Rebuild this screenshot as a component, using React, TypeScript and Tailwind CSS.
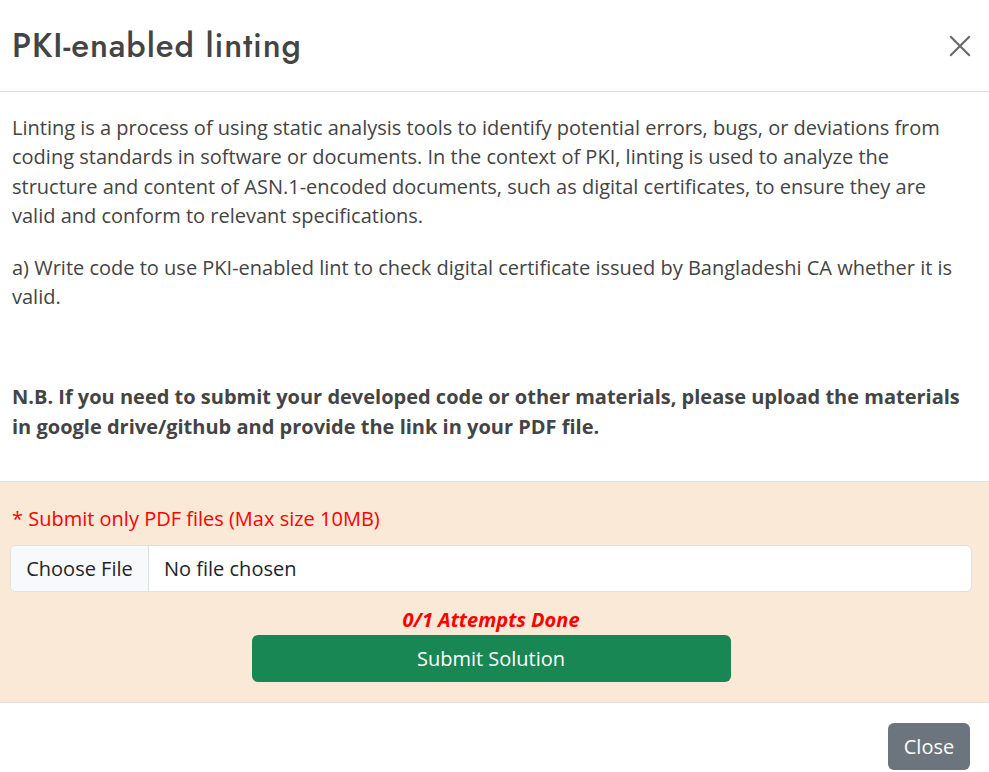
import React from 'react';

export default function App() {
  return (
    <div className="w-[989px] h-[772px] bg-white overflow-hidden font-['Open_Sans',sans-serif] text-[#444]">
      {/* Header */}
      <div className="h-[92px] flex items-center justify-between pl-[12px] pr-[16px] border-b border-[#dee2e6]">
        <h1 className="text-[33px] font-['Jost','Lato',sans-serif] font-medium text-[#444] tracking-[0.9px]">
          PKI-enabled linting
        </h1>
        <button type="button" className="w-[26px] h-[26px] flex items-center justify-center">
          <svg width="22" height="22" viewBox="0 0 22 22" fill="none">
            <path d="M2 2 L20 20 M20 2 L2 20" stroke="#6b6b6b" strokeWidth="2.2" strokeLinecap="square" />
          </svg>
        </button>
      </div>

      {/* Body */}
      <div className="h-[389px] pl-[12px] pr-[20px] pt-[21px] text-[20px] leading-[29.4px]">
        <p className="mb-[22px]">
          Linting is a process of using static analysis tools to identify potential errors, bugs, or deviations from
          coding standards in software or documents. In the context of PKI, linting is used to analyze the structure
          and content of ASN.1-encoded documents, such as digital certificates, to ensure they are valid and conform
          to relevant specifications.
        </p>
        <p>
          a) Write code to use PKI-enabled lint to check digital certificate issued by Bangladeshi CA whether it is
          valid.
        </p>
        <p className="mt-[71px] font-bold">
          N.B. If you need to submit your developed code or other materials, please upload the materials in google
          drive/github and provide the link in your PDF file.
        </p>
      </div>

      {/* Submission area */}
      <div className="h-[221px] bg-[#fae9d6] border-t border-[#dee2e6] pl-[10px] pr-[17px] pt-[23px] flex flex-col">
        <div className="text-[20px] text-[#ff0000] pl-[2px] leading-[28px]">* Submit only PDF files (Max size 10MB)</div>
        <div className="mt-[12px] h-[47px] flex items-stretch bg-white border border-[#dee2e6] rounded-[6px] overflow-hidden text-[20px] text-[#212529]">
          <div className="w-[138px] bg-[#f8f9fa] border-r border-[#dee2e6] flex items-center justify-center">
            Choose File
          </div>
          <div className="flex items-center pl-[15px]">No file chosen</div>
        </div>
        <div className="mt-[16px] text-center text-[20px] font-bold italic text-[#ff0000] leading-[24px]">
          0/1 Attempts Done
        </div>
        <div className="flex justify-center mt-[3px]">
          <button
            type="button"
            className="w-[479px] h-[47px] bg-[#198754] text-white text-[20px] rounded-[6px]"
          >
            Submit Solution
          </button>
        </div>
      </div>

      {/* Footer */}
      <div className="border-t border-[#dee2e6] h-[70px] flex items-start justify-end pr-[19px] pt-[20px]">
        <button
          type="button"
          className="w-[82px] h-[47px] bg-[#6c757d] text-white text-[20px] rounded-[6px]"
        >
          Close
        </button>
      </div>
    </div>
  );
}
